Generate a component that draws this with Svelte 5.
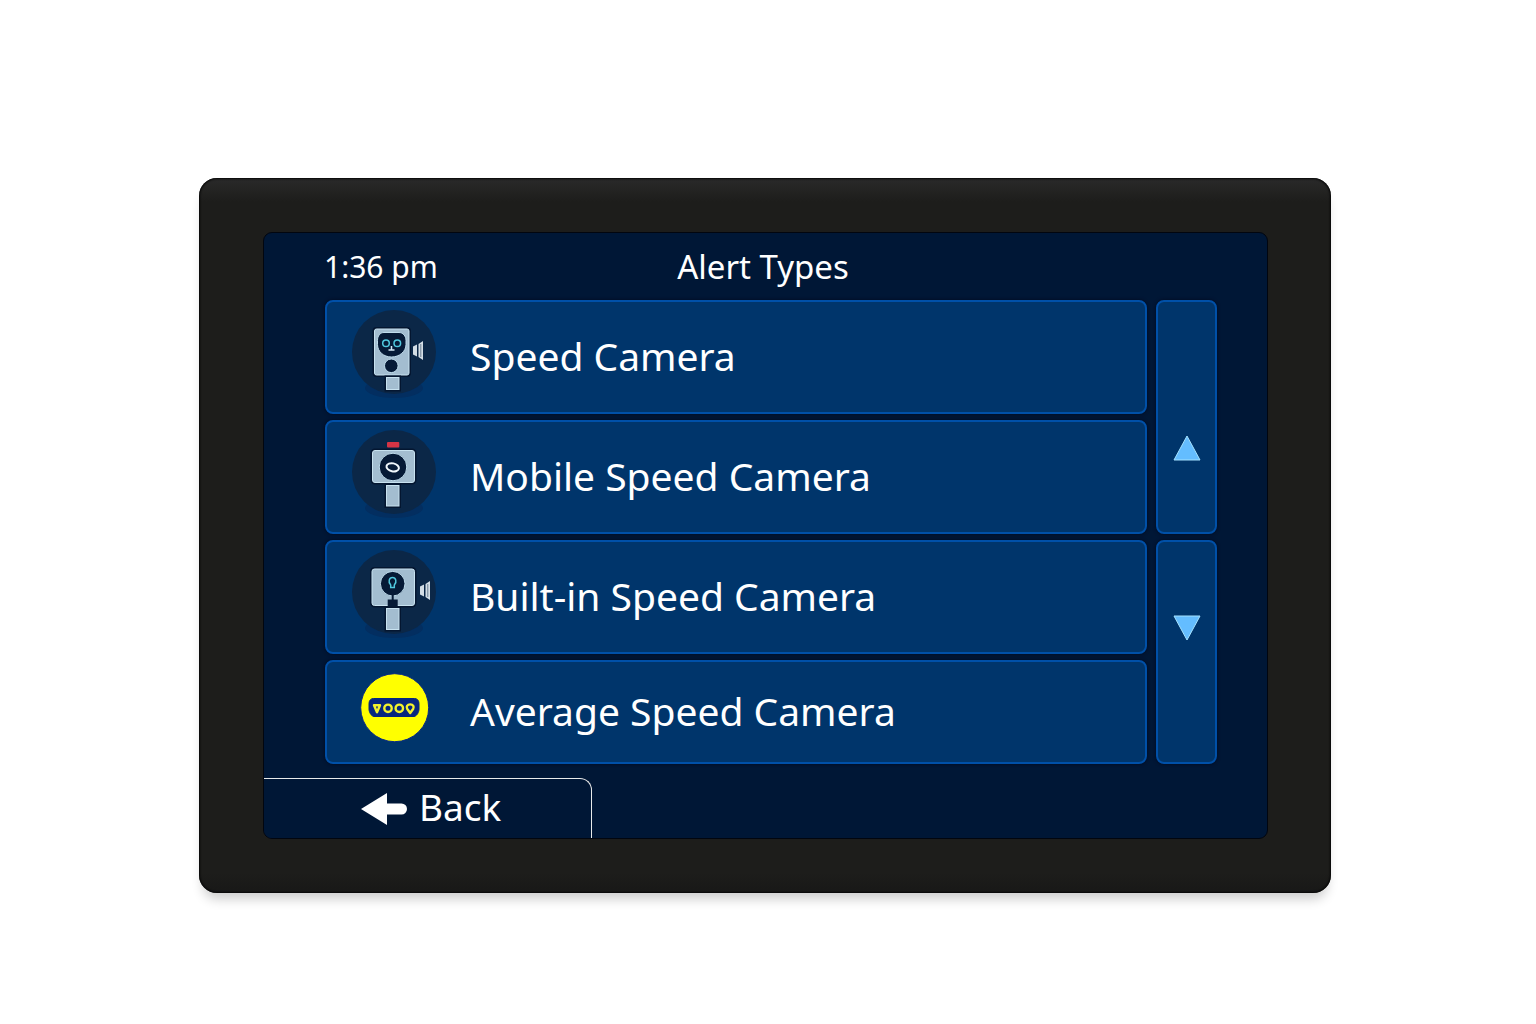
<script>
    const alerts = [
        { id: 'fixed', label: 'Speed Camera' },
        { id: 'mobile', label: 'Mobile Speed Camera' },
        { id: 'builtin', label: 'Built-in Speed Camera' },
        { id: 'average', label: 'Average Speed Camera' }
    ];

    let list;

    // Move focus through the list with the side buttons
    const move = (step) => {
        const rows = [...list.querySelectorAll('.alert')];
        const current = rows.indexOf(document.activeElement);
        const next = Math.min(rows.length - 1, Math.max(0, current + step));
        rows[next].focus();
    };
</script>

<main>
    <div class="device">
        <div class="screen">
            <header>
                <time datetime="13:36">1:36 pm</time>
                <h1>Alert Types</h1>
            </header>

            <div class="content" bind:this={list}>
                {#each alerts as alert}
                    <button class="alert">
                        <svg class="icon" viewBox="0 0 84 94" aria-hidden="true">
                            {#if alert.id !== 'average'}
                                <ellipse cx="42" cy="78" rx="29" ry="10" fill="#032e60" />
                                <circle cx="42" cy="42" r="42" fill="#0b2747" />
                            {/if}

                            {#if alert.id === 'fixed'}
                                <rect class="edge" x="22.5" y="19" width="34.5" height="46" rx="2" />
                                <rect class="body" x="22.5" y="19" width="34.5" height="46" rx="2" />
                                <path class="dark" d="M32 22.500h15c4 0 7 3.500 7 8v4c0 7-6.500 12.500-14.500 12.500S25.500 41.500 25.500 34.500v-4c0-4.500 2.500-8 6.500-8z" />
                                <circle class="eye" cx="34" cy="33.300" r="3.300" />
                                <circle class="eye" cx="45.300" cy="33.300" r="3.300" />
                                <path d="M39.500 36v3.500M36.500 40h6" stroke="#d5e9f5" stroke-width="1.500" fill="none" />
                                <circle class="dark" cx="39.300" cy="55.800" r="6.800" />
                                <rect class="edge" x="34.500" y="67.500" width="12.500" height="12" />
                                <rect class="body" x="34.500" y="67.500" width="12.500" height="12" />
                                <path class="wave" d="M61 36.500l4-2v12l-4-2zM66.500 34l4.500-3v19l-4.500-3z" />
                                <path d="M68.800 34v13" stroke="#3c536c" stroke-width="0.700" />
                            {:else if alert.id === 'mobile'}
                                <rect x="35" y="12" width="12.300" height="5.500" rx="1" fill="#d53445" />
                                <rect class="edge" x="20.500" y="20.500" width="42" height="32" rx="2.500" />
                                <rect class="body" x="20.500" y="20.500" width="42" height="32" rx="2.500" />
                                <circle class="dark" cx="41" cy="37" r="13.800" />
                                <ellipse cx="40.700" cy="37.300" rx="6.300" ry="4" transform="rotate(12 40.700 37.300)" fill="#081c38" stroke="#f2f8fc" stroke-width="2" />
                                <rect class="edge" x="34.500" y="55.500" width="12.500" height="20.500" />
                                <rect class="body" x="34.500" y="55.500" width="12.500" height="20.500" />
                            {:else if alert.id === 'builtin'}
                                <rect class="edge" x="20" y="19" width="42.500" height="36.500" rx="2.500" />
                                <rect class="body" x="20" y="19" width="42.500" height="36.500" rx="2.500" />
                                <circle class="dark" cx="40.700" cy="33.700" r="12.300" />
                                <path class="eye" d="M38.700 37.500v-2.500c-3-3-1.500-7.500 1.800-7.500s4.800 4.500 1.800 7.500v2.500z" />
                                <path d="M40.700 45v5" stroke="#061a36" stroke-width="2" />
                                <path d="M35.700 49.500h10v7.500h-10z" fill="#061a36" />
                                <rect class="edge" x="34.500" y="58.500" width="12.500" height="21" />
                                <rect class="body" x="34.500" y="58.500" width="12.500" height="21" />
                                <path class="wave" d="M68 36.500l4-2v12l-4-2zM73.500 34l4.500-3v19l-4.500-3z" />
                                <path d="M75.800 34v13" stroke="#3c536c" stroke-width="0.700" />
                            {:else}
                                <circle cx="42.700" cy="42.700" r="34" fill="#ffff00" stroke="#082a86" stroke-width="1" />
                                <path d="M21.500 33.500h41c3 0 4.500 2.500 4.500 5v5.500c0 3-2 7-5 7.500h-40c-3-0.500-5-4.500-5-7.500v-5.500c0-2.500 1.500-5 4.500-5z" fill="#07277f" stroke="#07277f" stroke-width="1" />
                                <g fill="none" stroke="#f4f22b" stroke-width="2.400">
                                    <path d="M22 40.200h6l-3 7z" stroke-linejoin="round" />
                                    <circle cx="36" cy="43.300" r="3.700" />
                                    <circle cx="47.300" cy="43.300" r="3.700" />
                                    <path d="M58.200 48l-2.900-4c-1.500-2.400 0-4.600 2.900-4.600s4.400 2.200 2.900 4.600z" stroke-linejoin="round" />
                                </g>
                            {/if}
                        </svg>
                        <span>{alert.label}</span>
                    </button>
                {/each}

                <button class="scroll up" aria-label="Scroll up" onclick={() => move(-1)}>
                    <svg viewBox="0 0 28 26" aria-hidden="true">
                        <path d="M14 1l13 24h-26z" />
                    </svg>
                </button>
                <button class="scroll down" aria-label="Scroll down" onclick={() => move(1)}>
                    <svg viewBox="0 0 28 26" aria-hidden="true">
                        <path d="M14 25L1 1h26z" />
                    </svg>
                </button>
            </div>

            <button class="back">
                <svg viewBox="0 0 46 32" aria-hidden="true">
                    <path d="M0 16L26 0v10.500h14.500a5.500 5.500 0 0 1 0 11H26V32z" />
                </svg>
                <span>Back</span>
            </button>
        </div>
    </div>
</main>

<style>
    :global(body) {
        margin: 0;
        background: #fff;
    }

    main {
        padding: 178px 205px 131px 199px;
        font-family: "Noto Sans", "Open Sans", sans-serif;
        color: #fff;
    }

    /* Plastic housing around the display */
    .device {
        padding: 54px 63px 54px 64px;
        border-radius: 18px;
        background: linear-gradient(#2a2a2a 0, #1d1d1b 24px, #1d1d1b calc(100% - 20px), #181817 100%);
        box-shadow: inset 0 0 2px 1px #060606, 0 10px 12px -4px rgba(0, 0, 0, 0.2);
    }

    .screen {
        display: flex;
        flex-direction: column;
        border: 1px solid #02060f;
        border-radius: 9px;
        background: #001736;
        overflow: hidden;
    }

    header {
        display: grid;
        grid-template-columns: 1fr auto 1fr;
        align-items: center;
        height: 67px;
        padding: 0 65px 0 60px;
    }

    time {
        font-size: 30px;
    }

    h1 {
        margin: 0;
        font-size: 33px;
        font-weight: 400;
    }

    button {
        box-sizing: border-box;
        margin: 0;
        padding: 0;
        border: none;
        color: inherit;
        font-family: inherit;
        cursor: pointer;
    }

    /* Rows on the left, the two scroll buttons on the right */
    .content {
        display: grid;
        grid-template-columns: 1fr 61px;
        grid-template-rows: 114px 114px 114px 104px;
        gap: 6px 9px;
        padding: 0 50px 0 61px;
    }

    .alert,
    .scroll {
        display: flex;
        align-items: center;
        border: 2px solid #0050a8;
        border-radius: 8px;
        background: #00356b;
        box-shadow: 0 0 3px 1px #000f28;
    }

    .alert {
        grid-column: 1;
        gap: 34px;
        padding-left: 25px;
        font-size: 39px;
        text-align: left;
    }

    .alert span,
    .back span {
        padding-bottom: 4px;
    }

    .icon {
        width: 84px;
        height: 94px;
        flex: none;
    }

    .edge {
        fill: none;
        stroke: #041630;
        stroke-width: 4;
    }

    .body {
        fill: #a3bdd0;
        stroke: #c8e2f0;
        stroke-width: 1;
    }

    .dark {
        fill: #061a36;
        stroke: #bfdcec;
        stroke-width: 1;
    }

    .eye {
        fill: none;
        stroke: #50c8de;
        stroke-width: 1.5;
    }

    .wave {
        fill: #d3dde5;
    }

    .scroll {
        grid-column: 2;
        justify-content: center;
    }

    .scroll svg {
        width: 28px;
        height: 26px;
        fill: #64bdff;
        stroke: #a4e2ff;
        stroke-width: 1;
    }

    .up {
        grid-row: 1 / 3;
        padding-top: 62px;
    }

    .down {
        grid-row: 3 / 5;
        padding-bottom: 48px;
    }

    .back {
        display: flex;
        align-items: center;
        gap: 12px;
        width: 328px;
        height: 60px;
        margin-top: 14px;
        padding-left: 97px;
        border: solid #e8eaea;
        border-width: 1px 1px 0 0;
        border-radius: 0 12px 0 0;
        background: #001736;
        font-size: 37px;
    }

    .back svg {
        width: 46px;
        height: 32px;
        fill: #fff;
    }
</style>
